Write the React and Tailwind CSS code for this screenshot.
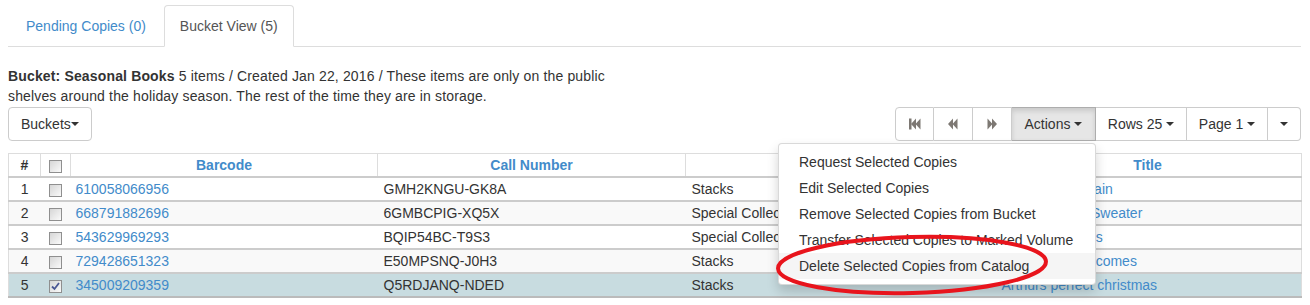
import React from 'react'

const ROWS = [
  { n: 1, barcode: '610058066956', call: 'GMH2KNGU-GK8A', loc: 'Stacks', title: 'A Winter Fountain' },
  { n: 2, barcode: '668791882696', call: '6GMBCPIG-XQ5X', loc: 'Special Collections', title: 'My Christmas Sweater' },
  { n: 3, barcode: '543629969293', call: 'BQIP54BC-T9S3', loc: 'Special Collections', title: 'Holiday Cookies' },
  { n: 4, barcode: '729428651323', call: 'E50MPSNQ-J0H3', loc: 'Stacks', title: 'The Snowman comes' },
  { n: 5, barcode: '345009209359', call: 'Q5RDJANQ-NDED', loc: 'Stacks', title: 'Arthurs perfect christmas', checked: true }
]

const ACTIONS = [
  'Request Selected Copies',
  'Edit Selected Copies',
  'Remove Selected Copies from Bucket',
  'Transfer Selected Copies to Marked Volume',
  'Delete Selected Copies from Catalog'
]

function Caret() {
  return <span className="inline-block w-0 h-0 align-middle border-t-[4px] border-t-[#333] border-x-[4px] border-x-transparent" />
}

function Checkbox({ checked }) {
  return (
    <span className="inline-flex w-[13px] h-[13px] border border-[#8f8f8f] bg-gradient-to-br from-[#d6d6d6] to-[#fafafa] items-center justify-center align-middle">
      {checked && (
        <svg width="9" height="9" viewBox="0 0 9 9">
          <path d="M1 4.5 L3.5 7 L8 1" stroke="#4a5794" strokeWidth="1.8" fill="none" />
        </svg>
      )}
    </span>
  )
}

function Glyph({ kind }) {
  return (
    <svg width="14" height="12" viewBox="0 0 14 12" fill="#7d7873">
      {kind === 'first' && (
        <>
          <rect x="1" y="0.5" width="2.5" height="11" />
          <path d="M3 6 L8 0.5 L8 11.5 Z" />
          <path d="M7.5 6 L12.5 0.5 L12.5 11.5 Z" />
        </>
      )}
      {kind === 'prev' && (
        <>
          <path d="M2 6 L7 0.5 L7 11.5 Z" />
          <path d="M6.5 6 L11.5 0.5 L11.5 11.5 Z" />
        </>
      )}
      {kind === 'next' && (
        <>
          <path d="M12 6 L7 0.5 L7 11.5 Z" />
          <path d="M7.5 6 L2.5 0.5 L2.5 11.5 Z" />
        </>
      )}
    </svg>
  )
}

export default function App() {
  return (
    <div className="relative w-[1310px] h-[305px] overflow-hidden bg-white pl-2 pr-[9px] font-['Liberation_Sans',Arial,sans-serif] text-[14px] leading-[20px] text-[#333]">

      {/* tabs */}
      <ul className="flex pt-[5px] border-b border-[#ddd]">
        <li className="ml-[2px] mr-[2px] -mb-px">
          <span className="block px-[15px] py-[10px] text-[#428bca] border border-transparent">Pending Copies (0)</span>
        </li>
        <li className="-mb-px">
          <span className="block px-[15px] py-[10px] text-[#555] bg-white border border-[#ddd] border-b-transparent rounded-t-[4px]">Bucket View (5)</span>
        </li>
      </ul>

      {/* bucket info */}
      <p className="mt-[19px] w-[632px] tracking-[0.15px]">
        <strong>Bucket: Seasonal Books</strong> 5 items / Created Jan 22, 2016 / These items are only on the public shelves around the holiday season. The rest of the time they are in storage.
      </p>

      {/* toolbar */}
      <div className="flex justify-between items-start mt-[1px]">
        <button className="h-[34px] px-[12px] border border-[#ccc] rounded-[4px] bg-white text-[#333] flex items-center">
          Buckets<Caret />
        </button>

        <div className="relative flex h-[34px]">
          <button className="w-[39px] border border-[#ccc] rounded-l-[4px] flex items-center justify-center"><Glyph kind="first" /></button>
          <button className="w-[39px] border border-l-0 border-[#ccc] flex items-center justify-center"><Glyph kind="prev" /></button>
          <button className="w-[39px] border border-l-0 border-[#ccc] flex items-center justify-center"><Glyph kind="next" /></button>
          <div className="relative">
            <button className="h-full w-[84px] border border-l-0 border-[#adadad] bg-[#e6e6e6] shadow-[inset_0_3px_5px_rgba(0,0,0,0.125)] flex items-center justify-center gap-[4px]">
              Actions <Caret />
            </button>
            {/* dropdown */}
            <ul className="absolute right-0 top-[36px] z-10 w-[318px] py-[5px] bg-white border border-[rgba(0,0,0,0.15)] rounded-[4px] shadow-[0_6px_12px_rgba(0,0,0,0.175)]">
              {ACTIONS.map((a, i) => (
                <li key={a} className={'px-[20px] py-[3px] whitespace-nowrap ' + (i === 4 ? 'bg-[#f5f5f5]' : '')}>{a}</li>
              ))}
            </ul>
          </div>
          <button className="w-[91px] border border-l-0 border-[#ccc] flex items-center justify-center gap-[4px]">Rows 25 <Caret /></button>
          <button className="w-[81px] border border-l-0 border-[#ccc] flex items-center justify-center gap-[4px]">Page 1 <Caret /></button>
          <button className="w-[33px] border border-l-0 border-[#ccc] rounded-r-[4px] flex items-center justify-center"><Caret /></button>
        </div>
      </div>

      {/* table */}
      <table className="mt-[12px] w-[1293px] table-fixed border-collapse border border-[#ddd]">
        <colgroup>
          <col className="w-[32px]" />
          <col className="w-[30px]" />
          <col className="w-[307px]" />
          <col className="w-[308px]" />
          <col className="w-[308px]" />
          <col className="w-[308px]" />
        </colgroup>
        <thead>
          <tr className="border-b-2 border-[#ccc]">
            <th className="border-r border-[#ddd] py-[1px] font-bold text-center">#</th>
            <th className="border-r border-[#ddd] py-[1px] text-center"><Checkbox /></th>
            <th className="border-r border-[#ddd] py-[1px] text-[#428bca] font-bold">Barcode</th>
            <th className="border-r border-[#ddd] py-[1px] text-[#428bca] font-bold">Call Number</th>
            <th className="border-r border-[#ddd] py-[1px] text-[#428bca] font-bold">Location</th>
            <th className="py-[1px] text-[#428bca] font-bold">Title</th>
          </tr>
        </thead>
        <tbody>
          {ROWS.map(r => (
            <tr
              key={r.n}
              className={'border-b-2 border-[#ccc] last:border-b-[#bbb] ' + (r.checked ? 'bg-[#c8dce0]' : r.n % 2 === 0 ? 'bg-[#f9f9f9]' : 'bg-white')}
            >
              <td className="py-[1px] text-center">{r.n}</td>
              <td className="py-[1px] text-center"><Checkbox checked={r.checked} /></td>
              <td className="py-[1px] px-[5px] text-[#428bca] whitespace-nowrap overflow-hidden">{r.barcode}</td>
              <td className="py-[1px] px-[6px] whitespace-nowrap overflow-hidden">{r.call}</td>
              <td className="py-[1px] px-[6px] whitespace-nowrap overflow-hidden">{r.loc}</td>
              <td className="py-[1px] px-[8px] text-[#428bca] whitespace-nowrap overflow-hidden">{r.title}</td>
            </tr>
          ))}
        </tbody>
      </table>

      {/* red marker ellipse */}
      <svg className="absolute left-[770px] top-[230px] z-20 pointer-events-none" width="290" height="72" viewBox="0 0 290 72">
        <ellipse cx="142" cy="35" rx="134" ry="28" fill="none" stroke="#e8141c" strokeWidth="4" transform="rotate(-1.5 142 35)" />
      </svg>
    </div>
  )
}
